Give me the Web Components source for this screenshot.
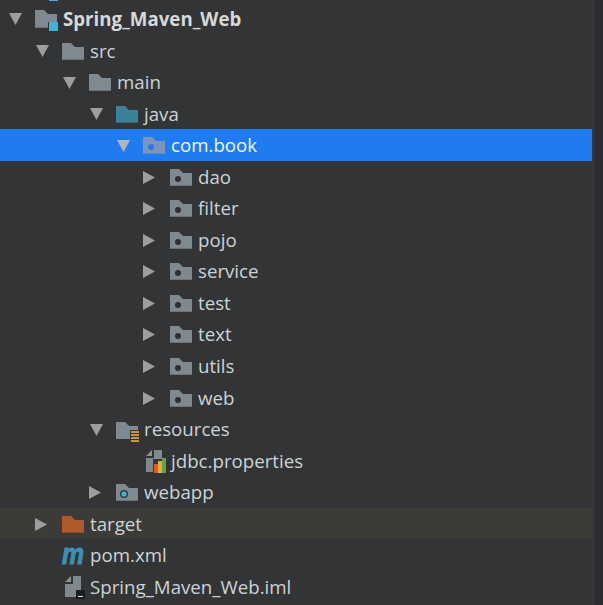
<!DOCTYPE html>
<html>
<head>
<meta charset="utf-8">
<style>
  html, body { margin: 0; padding: 0; background: #323435; }
</style>
</head>
<body>
<template id="tree-view-tpl">
  <style>
    :host { display: flex; width: 603px; height: 605px; overflow: hidden; background: #323435; }
    #main { width: 592px; height: 605px; }
    #sliver { width: 9px; height: 1px; margin-left: 49px; margin-bottom: 2.2px; background: #3fb3dc; }
    #edge { width: 1px; background: #3c3e41; margin-left: 1px; }
    #strip { flex: 1; background: #2b2b30; }
  </style>
  <div id="main">
    <div id="sliver"></div>
    <slot></slot>
  </div>
  <div id="edge"></div>
  <div id="strip"></div>
</template>

<template id="tree-row-tpl">
  <style>
    :host {
      display: flex; align-items: center; height: 31.55px; box-sizing: border-box;
      font: 18.7px "Open Sans", "Noto Sans", sans-serif; color: #ccd3d8; white-space: nowrap;
    }
    :host([selected]) { background: #1e7cf0; color: #eef5fd; }
    :host([hot]) { background: #3d3b37; }
    :host([bold]) { font-weight: 700; color: #d6d9da; }
    #arrow { width: 27px; margin-right: 6px; display: flex; justify-content: center; flex: none; padding-top: 1px; }
    #icon { width: 28px; display: flex; flex: none; padding-top: 1px; }
    #label { margin-top: -1px; }
    svg { display: block; }
  </style>
  <span id="arrow"></span>
  <span id="icon"><slot name="icon"></slot></span>
  <span id="label"><slot></slot></span>
</template>

<template id="tree-icon-tpl">
  <style>
    :host { display: block; line-height: 0; }
    svg { display: block; overflow: visible; }
    .m { font: italic 700 30px "Liberation Sans", sans-serif; fill: #3f8fb5; stroke: #3f8fb5; stroke-width: 1px; }
  </style>
  <span id="box"></span>
</template>

<tree-view>
  <tree-row depth="0" arrow="down" bold><tree-icon slot="icon" kind="module"></tree-icon>Spring_Maven_Web</tree-row>
  <tree-row depth="1" arrow="down"><tree-icon slot="icon" kind="folder"></tree-icon>src</tree-row>
  <tree-row depth="2" arrow="down"><tree-icon slot="icon" kind="folder"></tree-icon>main</tree-row>
  <tree-row depth="3" arrow="down"><tree-icon slot="icon" kind="source"></tree-icon>java</tree-row>
  <tree-row depth="4" arrow="down" selected><tree-icon slot="icon" kind="package-on"></tree-icon>com.book</tree-row>
  <tree-row depth="5" arrow="right"><tree-icon slot="icon" kind="package"></tree-icon>dao</tree-row>
  <tree-row depth="5" arrow="right"><tree-icon slot="icon" kind="package"></tree-icon>filter</tree-row>
  <tree-row depth="5" arrow="right"><tree-icon slot="icon" kind="package"></tree-icon>pojo</tree-row>
  <tree-row depth="5" arrow="right"><tree-icon slot="icon" kind="package"></tree-icon>service</tree-row>
  <tree-row depth="5" arrow="right"><tree-icon slot="icon" kind="package"></tree-icon>test</tree-row>
  <tree-row depth="5" arrow="right"><tree-icon slot="icon" kind="package"></tree-icon>text</tree-row>
  <tree-row depth="5" arrow="right"><tree-icon slot="icon" kind="package"></tree-icon>utils</tree-row>
  <tree-row depth="5" arrow="right"><tree-icon slot="icon" kind="package"></tree-icon>web</tree-row>
  <tree-row depth="3" arrow="down"><tree-icon slot="icon" kind="resources"></tree-icon>resources</tree-row>
  <tree-row depth="4"><tree-icon slot="icon" kind="properties"></tree-icon>jdbc.properties</tree-row>
  <tree-row depth="3" arrow="right"><tree-icon slot="icon" kind="web"></tree-icon>webapp</tree-row>
  <tree-row depth="1" arrow="right" hot><tree-icon slot="icon" kind="target"></tree-icon>target</tree-row>
  <tree-row depth="1"><tree-icon slot="icon" kind="maven"></tree-icon>pom.xml</tree-row>
  <tree-row depth="1"><tree-icon slot="icon" kind="iml"></tree-icon>Spring_Maven_Web.iml</tree-row>
</tree-view>

<script>
const folder = (fill, edge) => `
  <path d="M0 0H9L13 4H22V17H0Z" fill="${fill}"/>
  <path d="M0 16H22V17H0Z" fill="${edge}"/>`;

const svg = (w, h, body, css = '') => `<svg width="${w}" height="${h}" viewBox="0 0 ${w} ${h}" style="${css}">${body}</svg>`;

const ICONS = {
  folder: () => svg(22, 17, folder('#7f8a90', '#6a7479')),
  source: () => svg(22, 17, folder('#3c8199', '#32697d')),
  target: () => svg(22, 17, folder('#b05a2b', '#974c23')),
  package: () => svg(22, 17, folder('#7f8a90', '#6a7479') + '<circle cx="8" cy="10" r="3" fill="#2d2f30"/>'),
  'package-on': () => svg(22, 17, folder('#7d95b8', '#7089ad') + '<circle cx="8" cy="10" r="3" fill="#1e7cf0"/>'),
  web: () => svg(22, 17, folder('#7f8a90', '#6a7479') + '<circle cx="8" cy="10" r="4" fill="#2d3a40"/><circle cx="8" cy="10" r="2.6" fill="#3fb3dc"/>'),
  module: () => svg(23, 21, `
    <path d="M0 0H9L13 4H22V12H13V18H0Z" fill="#7f8a90"/>
    <path d="M0 17H13V18H0Z" fill="#6a7479"/>
    <path d="M14 12H23V21H14Z" fill="#3fb3dc"/>`, 'margin-top:3px'),
  resources: () => svg(23, 20, `
    <path d="M0 0H9L13 4H22V8H14V17H0Z" fill="#7f8a90"/>
    <path d="M15 9H23V11H15ZM15 12H23V14H15ZM15 15H23V17H15ZM15 18H23V20H15Z" fill="#c9963f"/>`, 'margin-top:5px'),
  properties: () => svg(20, 23, `
    <path d="M6 0V6H0Z" fill="#8a959b"/>
    <path d="M8 0H16V9H7V22H0V8H8Z" fill="#7f8a90"/>
    <rect x="8" y="14" width="4" height="9" fill="#e2572e"/>
    <rect x="12" y="11" width="4" height="12" fill="#f0a732"/>
    <rect x="16" y="8" width="4" height="15" fill="#5aa64a"/>`, 'margin-left:3px'),
  iml: () => svg(20, 23, `
    <path d="M6 0V6H0Z" fill="#8a959b"/>
    <path d="M8 0H16V21H0V8H8Z" fill="#7f8a90"/>
    <rect x="11" y="14" width="9" height="9" fill="#1d1d1f"/>
    <rect x="13" y="20" width="5" height="1" fill="#e8e8e8"/>`, 'margin-left:3px'),
  maven: () => svg(22, 16, '<text class="m" x="0" y="16" textLength="22" lengthAdjust="spacingAndGlyphs">m</text>')
};

class TreeIcon extends HTMLElement {
  constructor() {
    super();
    this.attachShadow({ mode: 'open' });
    this.shadowRoot.appendChild(document.getElementById('tree-icon-tpl').content.cloneNode(true));
  }
  connectedCallback() {
    const draw = ICONS[this.getAttribute('kind')];
    this.shadowRoot.querySelector('#box').innerHTML = draw ? draw() : '';
  }
}

class TreeRow extends HTMLElement {
  constructor() {
    super();
    this.attachShadow({ mode: 'open' });
    this.shadowRoot.appendChild(document.getElementById('tree-row-tpl').content.cloneNode(true));
  }
  connectedCallback() {
    // each level of the tree is 27px further in
    this.style.paddingLeft = (Number(this.getAttribute('depth')) * 27 + 2) + 'px';
    const dir = this.getAttribute('arrow');
    const arrow = this.shadowRoot.querySelector('#arrow');
    if (dir === 'down') arrow.innerHTML = svg(13, 12, '<path d="M0 0H13L6.5 12Z" fill="#9d9e9f"/>', 'margin-left:-1px');
    if (dir === 'right') arrow.innerHTML = svg(12, 13, '<path d="M0 0L12 6.5L0 13Z" fill="#9d9e9f"/>', 'margin-left:-4px');
    if (this.hasAttribute('selected')) arrow.querySelector('path').setAttribute('fill', '#b3b5b8');
  }
}

class TreeView extends HTMLElement {
  constructor() {
    super();
    this.attachShadow({ mode: 'open' });
    this.shadowRoot.appendChild(document.getElementById('tree-view-tpl').content.cloneNode(true));
  }
}

customElements.define('tree-icon', TreeIcon);
customElements.define('tree-row', TreeRow);
customElements.define('tree-view', TreeView);
</script>
</body>
</html>
